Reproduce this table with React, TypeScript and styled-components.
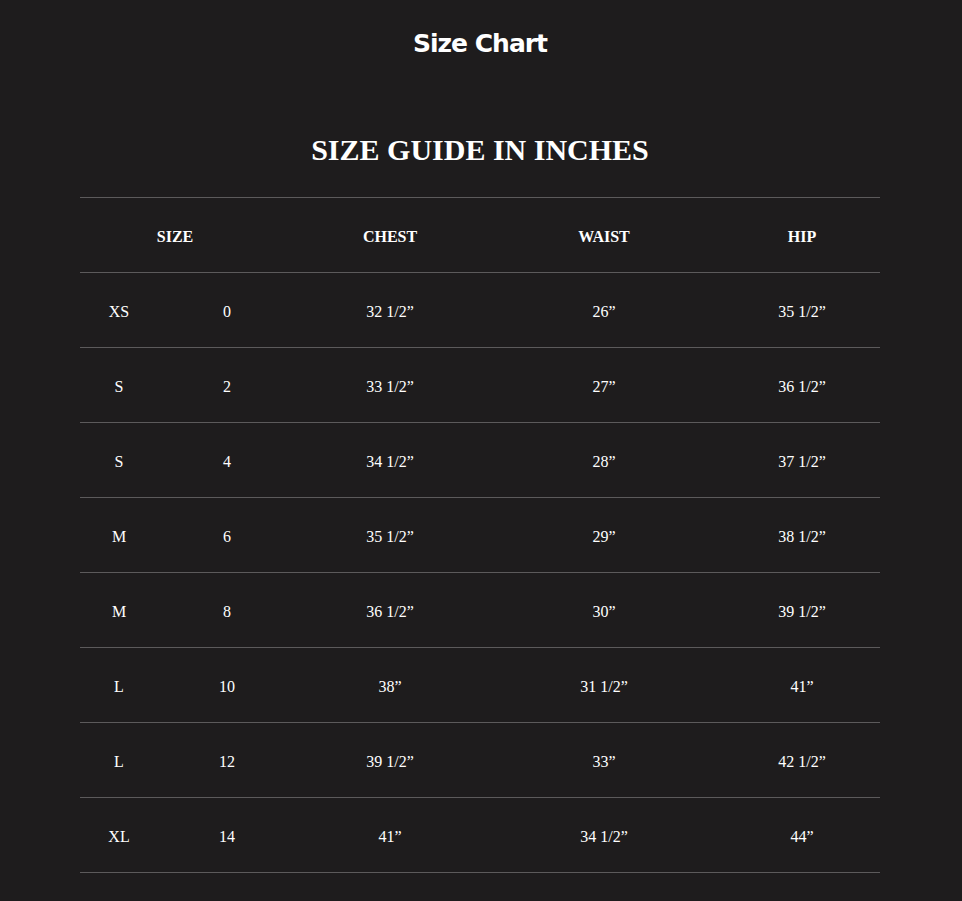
import React from "react";
import styled, { createGlobalStyle } from "styled-components";

const Global = createGlobalStyle`
  html, body { margin: 0; padding: 0; background: #1e1c1d; }
  body { color: #ffffff; }
`;

const Page = styled.div`
  width: 960px;
  min-height: 901px;
  background: #1e1c1d;
  display: flex;
  flex-direction: column;
  align-items: center;
  box-sizing: border-box;
  padding-top: 25px;
`;

const PageTitle = styled.h1`
  margin: 0;
  font-family: "DejaVu Sans", "Liberation Sans", sans-serif;
  font-weight: 700;
  font-size: 25px;
  letter-spacing: -1px;
  line-height: 38px;
  color: #fff;
`;

const GuideTitle = styled.h2`
  margin: 67px 0 0;
  font-family: "Liberation Serif", "Times New Roman", serif;
  font-weight: 700;
  font-size: 30px;
  line-height: 40px;
  color: #fff;
`;

const Table = styled.div`
  width: 800px;
  margin-top: 27px;
  border-top: 1px solid #5c5a5b;
  font-family: "Liberation Serif", "Times New Roman", serif;
  font-size: 16px;
  color: #fff;
`;

const Row = styled.div`
  display: grid;
  grid-template-columns: 78px 138px 188px 240px 156px;
  height: 75px;
  padding-top: 3px;
  align-items: center;
  border-bottom: 1px solid #5c5a5b;
  box-sizing: border-box;
`;

const Cell = styled.div<{ $span?: number; $shift?: number }>`
  text-align: center;
  grid-column: span ${(p) => p.$span ?? 1};
  padding-right: ${(p) => p.$shift ?? 0}px;
`;

const HeadCell = styled(Cell)`
  font-weight: 700;
  font-size: 16px;
`;

const rows: [string, string, string, string, string][] = [
  ["XS", "0", "32 1/2”", "26”", "35 1/2”"],
  ["S", "2", "33 1/2”", "27”", "36 1/2”"],
  ["S", "4", "34 1/2”", "28”", "37 1/2”"],
  ["M", "6", "35 1/2”", "29”", "38 1/2”"],
  ["M", "8", "36 1/2”", "30”", "39 1/2”"],
  ["L", "10", "38”", "31 1/2”", "41”"],
  ["L", "12", "39 1/2”", "33”", "42 1/2”"],
  ["XL", "14", "41”", "34 1/2”", "44”"],
];

export default function App() {
  return (
    <Page>
      <Global />
      <PageTitle>Size Chart</PageTitle>
      <GuideTitle>SIZE GUIDE IN INCHES</GuideTitle>
      <Table>
        <Row>
          <HeadCell $span={2} $shift={26}>SIZE</HeadCell>
          <HeadCell>CHEST</HeadCell>
          <HeadCell>WAIST</HeadCell>
          <HeadCell>HIP</HeadCell>
        </Row>
        {rows.map((r, i) => (
          <Row key={i}>
            {r.map((c, j) => (
              <Cell key={j}>{c}</Cell>
            ))}
          </Row>
        ))}
      </Table>
    </Page>
  );
}
